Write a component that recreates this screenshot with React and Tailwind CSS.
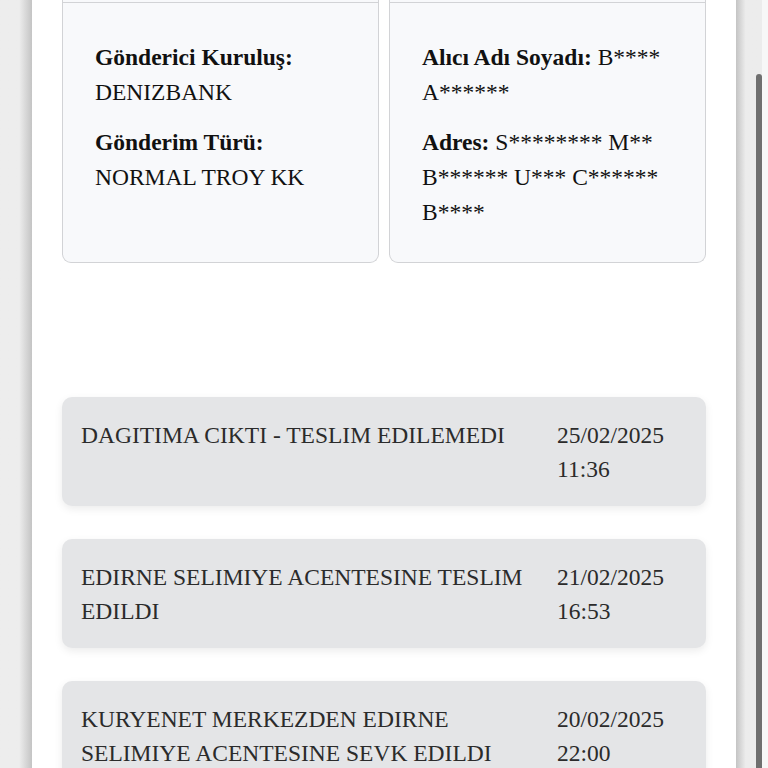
import React from "react";

const HAREKETLER = [
  { aciklama: "DAGITIMA CIKTI - TESLIM EDILEMEDI", tarih: "25/02/2025", saat: "11:36" },
  { aciklama: "EDIRNE SELIMIYE ACENTESINE TESLIM EDILDI", tarih: "21/02/2025", saat: "16:53" },
  { aciklama: "KURYENET MERKEZDEN EDIRNE SELIMIYE ACENTESINE SEVK EDILDI", tarih: "20/02/2025", saat: "22:00" },
];

const BilgiKarti = ({ children }) => (
  <div className="flex flex-col rounded-b-[9px] border-x-[1.5px] border-b-[1.5px] border-[#d2d3d6] bg-[#f8f9fb]">
    <div className="h-[3px] border-b-[1.5px] border-[#d2d3d6]" />
    <div className="flex-1 px-[32px] pt-[37px] pb-[32px] leading-[35px]">{children}</div>
  </div>
);

const App = () => {
  return (
    <div
      className="flex h-[768px] w-[768px] overflow-hidden bg-white text-[23.5px] leading-[34px] text-[#111]"
      style={{ fontFamily: '"Liberation Serif", "Times New Roman", serif' }}
    >
      <div className="w-[32px] shrink-0 bg-gradient-to-r from-[#ededed] from-60% to-[#c4c4c4]" />

      <div className="flex-1 px-[30px]">
        <div className="grid grid-cols-2 gap-[10px]">
          <BilgiKarti>
            <p className="font-bold">Gönderici Kuruluş:</p>
            <p>DENIZBANK</p>
            <p className="mt-[15px] font-bold">Gönderim Türü:</p>
            <p>NORMAL TROY KK</p>
          </BilgiKarti>
          <BilgiKarti>
            <p>
              <span className="font-bold">Alıcı Adı Soyadı:</span> B**** A******
            </p>
            <p className="mt-[15px]">
              <span className="font-bold">Adres:</span> S******** M** B****** U*** C****** B****
            </p>
          </BilgiKarti>
        </div>

        <div className="mt-[134px] flex flex-col gap-[33px]">
          {HAREKETLER.map((h, idx) => (
            <div
              key={idx}
              className="grid grid-cols-[456px_130px] gap-[20px] rounded-[10px] bg-[#e4e5e7] px-[19px] pt-[21px] pb-[20px] text-[#2b2b2b] shadow-[0_3px_8px_rgba(0,0,0,0.08)]"
            >
              <p>{h.aciklama}</p>
              <p>
                {h.tarih}
                <br />
                {h.saat}
              </p>
            </div>
          ))}
        </div>
      </div>

      <div className="flex w-[32px] shrink-0 bg-gradient-to-r from-[#c4c4c4] to-[#ececec] to-30%">
        <div className="w-[20px]" />
        <div className="flex flex-col pt-[74px]">
          <div className="w-[6px] flex-1 rounded-t-[3px] bg-[#6f6f6f]" />
        </div>
        <div className="flex-1 bg-[#f7f7f7]" />
      </div>
    </div>
  );
};

export default App;
